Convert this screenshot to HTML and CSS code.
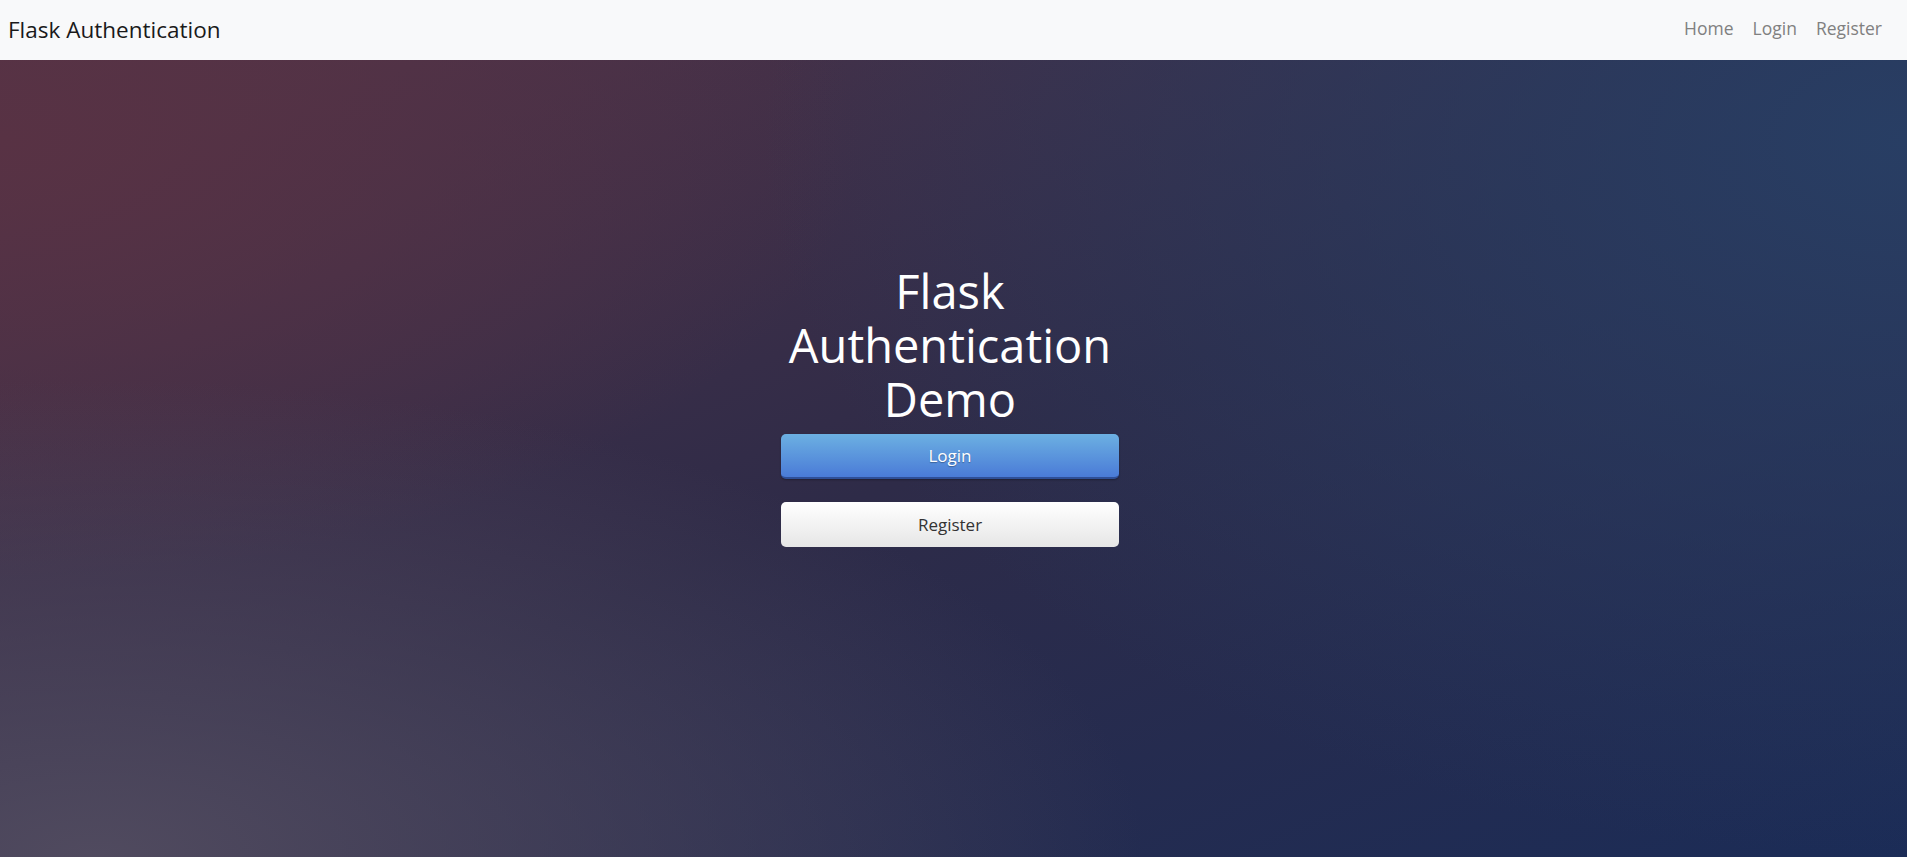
FILE: index.html
```html
<!DOCTYPE html>
<html lang="en">
<head>
<meta charset="utf-8">
<title>Flask Authentication</title>
<link rel="stylesheet" href="styles.css">
</head>
<body>
<nav class="navbar">
  <a class="brand" href="#">Flask Authentication</a>
  <div class="nav-links">
    <a href="#">Home</a>
    <a href="#">Login</a>
    <a href="#">Register</a>
  </div>
</nav>
<main class="hero">
  <div class="panel">
    <h1 class="title">Flask Authentication Demo</h1>
    <a class="btn btn-login" href="#">Login</a>
    <a class="btn btn-register" href="#">Register</a>
  </div>
</main>
</body>
</html>
```

FILE: styles.css
```css
* { box-sizing: border-box; }
html, body { margin: 0; padding: 0; height: 100%; }
body {
  font-family: "Open Sans", "Noto Sans", sans-serif;
  display: flex;
  flex-direction: column;
  min-height: 857px;
}
.navbar {
  height: 60px;
  flex: 0 0 60px;
  background: #f8f9fa;
  display: flex;
  align-items: center;
  justify-content: space-between;
  padding: 0 25px 2px 8px;
}
.brand {
  font-size: 22.5px;
  color: #1a1a1a;
  text-decoration: none;
}
.nav-links {
  display: flex;
  gap: 19px;
  margin-top: -3px;
}
.nav-links a {
  font-size: 17.5px;
  color: #808080;
  text-decoration: none;
}
.hero {
  flex: 1;
  display: flex;
  justify-content: center;
  padding-top: 204px;
  background:
    radial-gradient(ellipse 55% 60% at 5% 100%, rgba(82,76,96,0.95) 0%, rgba(82,76,96,0) 100%),
    radial-gradient(ellipse 60% 90% at 100% 10%, rgba(40,62,100,1) 0%, rgba(40,62,100,0) 100%),
    radial-gradient(ellipse 45% 55% at 0% 10%, rgba(88,50,68,1) 0%, rgba(88,50,68,0) 100%),
    linear-gradient(to bottom right, #523448 0%, #2e2b48 50%, #1b2c57 100%);
}
.panel {
  width: 338px;
  display: flex;
  flex-direction: column;
  align-items: stretch;
  margin-left: -7px;
}
.title {
  margin: 0 0 8px;
  font-size: 47px;
  line-height: 54px;
  font-weight: 400;
  color: #ffffff;
  text-align: center;
}
.btn {
  display: flex;
  align-items: center;
  justify-content: center;
  height: 45px;
  border-radius: 5px;
  font-size: 17px;
  text-decoration: none;
}
.btn-login {
  color: #ffffff;
  background: linear-gradient(to bottom, #6cb0e2 0%, #4a7bd7 100%);
  border-bottom: 2px solid #2e4f97;
  box-shadow: 0 1px 2px rgba(0,0,0,0.3);
  text-shadow: 0 1px 1px rgba(0,0,0,0.3);
  margin-bottom: 23px;
}
.btn-register {
  color: #333333;
  background: linear-gradient(to bottom, #ffffff 0%, #e6e6e6 100%);
}
```
